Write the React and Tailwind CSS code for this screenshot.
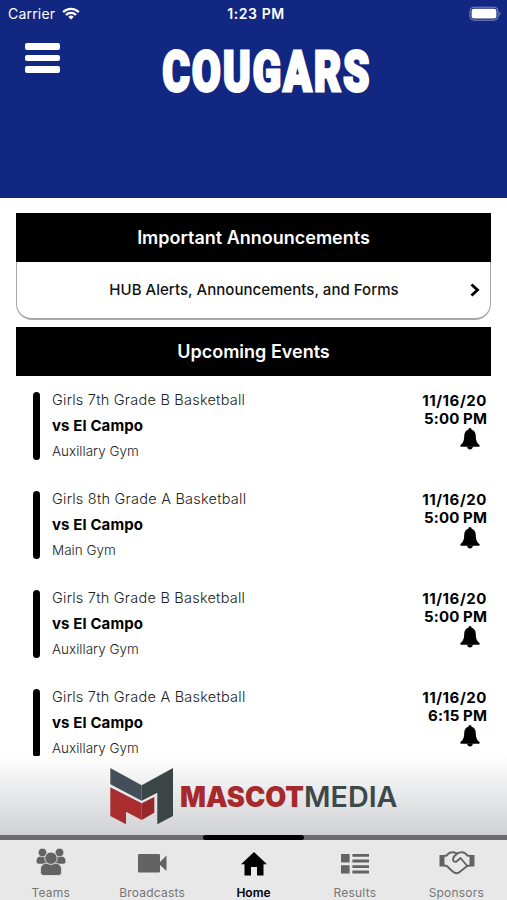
import React from "react";

const events = [
  { team: "Girls 7th Grade B Basketball", place: "Auxillary Gym", time: "5:00 PM" },
  { team: "Girls 8th Grade A Basketball", place: "Main Gym", time: "5:00 PM" },
  { team: "Girls 7th Grade B Basketball", place: "Auxillary Gym", time: "5:00 PM" },
  { team: "Girls 7th Grade A Basketball", place: "Auxillary Gym", time: "6:15 PM" },
];

function Wifi() {
  return (
    <svg width="18" height="13" viewBox="0 0 18 13" className="ml-[7px]" fill="none" stroke="#fff" strokeWidth="2.3">
      <path d="M1.2 5.1A11 11 0 0 1 16.8 5.1" />
      <path d="M4 8A7 7 0 0 1 14 8" />
      <path d="M9 12.6L6.3 9.9a3.9 3.9 0 0 1 5.4 0z" fill="#fff" stroke="none" />
    </svg>
  );
}

function Battery() {
  return (
    <svg width="33" height="16" viewBox="0 0 33 16">
      <rect x="1" y="1.2" width="28" height="13" rx="4" fill="none" stroke="#8790c4" strokeWidth="1" />
      <rect x="2.6" y="2.8" width="24.8" height="9.8" rx="2.4" fill="#fff" />
      <path d="M30.5 5.5q2 2.2 0 4.4z" fill="#8790c4" />
    </svg>
  );
}

function Bell() {
  return (
    <svg width="20" height="22" viewBox="0 0 20 22" className="mr-[7px]" fill="#000">
      <path d="M10 0a1.6 1.6 0 0 0-1.6 1.7C5.600 2.500 4.300 4.700 4.200 8C4.100 12 3.600 14.500.3 17.200Q.2 18.800 1.200 18.800H18.800Q19.800 18.800 19.700 17.200C16.400 14.500 15.900 12 15.800 8C15.700 4.700 14.400 2.500 11.600 1.700A1.600 1.600 0 0 0 10 0z" />
      <path d="M7.200 18.600h5.600a2.800 2.800 0 0 1-5.600 0z" />
    </svg>
  );
}

function TeamsIcon() {
  return (
    <svg width="30" height="28" viewBox="0 0 30 28" className="mt-[-3px]" fill="#636363">
      <path d="M4 8.600Q.5 9.500.5 13v.8q0 2 2 2H11V8.600z" />
      <path d="M26 8.600q3.500.9 3.500 4.400v.8q0 2-2 2H19V8.600z" />
      <circle cx="6.500" cy="4.500" r="4.300" stroke="#e8e8e8" strokeWidth=".7" />
      <circle cx="23.500" cy="4.500" r="4.300" stroke="#e8e8e8" strokeWidth=".7" />
      <path d="M10 15.200Q4.500 16 4.500 21.500v3q0 3 3 3h15q3 0 3-3v-3q0-5.500-5.500-6.300z" stroke="#e8e8e8" strokeWidth=".8" />
      <circle cx="15" cy="10.200" r="6.200" stroke="#e8e8e8" strokeWidth=".9" />
    </svg>
  );
}

function VideoIcon() {
  return (
    <svg width="29" height="19" viewBox="0 0 29 19" fill="#636363">
      <rect x="0" y="0" width="22" height="18.500" rx="1.200" />
      <path d="M22 8L28.500 1.500V17L22 11z" />
    </svg>
  );
}

function HomeIcon() {
  return (
    <svg width="26" height="24" viewBox="0 0 26 24" fill="#000">
      <path d="M13 0L26 12.300H22.500V23.600H16V15H10V23.600H3.500V12.300H0z" />
    </svg>
  );
}

function ResultsIcon() {
  return (
    <svg width="28" height="20" viewBox="0 0 28 20" fill="#636363">
      <path d="M0 0h8.600v8.400H0zM0 11.200h8.600v8.200H0zM11.400 0H28v2.800H11.400zM11.400 5.600H28v2.800H11.400zM11.400 11.200H28v2.800H11.400zM11.400 16.600H28v2.800H11.400z" />
    </svg>
  );
}

function HandshakeIcon() {
  return (
    <svg width="36" height="24" viewBox="0 0 36 24" className="mt-[-2px]" fill="none" stroke="#636363" strokeWidth="1.9" strokeLinejoin="round" strokeLinecap="round">
      <rect x="0.500" y="4" width="5" height="11.500" fill="#636363" stroke="none" />
      <rect x="30.500" y="4" width="5" height="11.500" fill="#636363" stroke="none" />
      <path d="M5.500 4.800H7.500Q10 1.300 13 1.200Q16 1 18 2.600Q20.500 1 23.500 1.200Q26.500 1.500 28.500 4.800H30.500" />
      <path d="M5.500 14.700H7.500L14 20.800Q17 23.200 20 21.400L28.500 14.700H30.500" />
      <path d="M18 2.600Q14.800 4.800 14 8.300Q14.300 11.500 17.500 10.500L21.500 7L27.800 14.500" />
    </svg>
  );
}

const tabs = [
  { label: "Teams", icon: <TeamsIcon /> },
  { label: "Broadcasts", icon: <VideoIcon /> },
  { label: "Home", icon: <HomeIcon />, active: true },
  { label: "Results", icon: <ResultsIcon /> },
  { label: "Sponsors", icon: <HandshakeIcon /> },
];

function Header() {
  return (
    <header className="flex h-[198px] shrink-0 flex-col bg-[#122782] text-white">
      <div className="grid h-[27px] grid-cols-3 items-center px-[8px] text-[14px]">
        <div className="flex items-center tracking-[0.2px]">Carrier<Wifi /></div>
        <div className="pl-[5px] text-center font-semibold tracking-[0.600px] whitespace-nowrap">1:23 PM</div>
        <div className="-mr-[3px] flex justify-end"><Battery /></div>
      </div>
      <div className="flex">
        <div className="ml-[25px] mt-[16px] flex w-[35px] flex-col gap-[5px]">
          <div className="h-[7px] rounded-[2px] bg-white" />
          <div className="h-[6px] rounded-[2px] bg-white" />
          <div className="h-[7px] rounded-[2px] bg-white" />
        </div>
        <svg width="300" height="80" viewBox="0 0 300 80" className="ml-[96px] mt-[12px] overflow-visible">
          <text x="6.500" y="52" textLength="209" lengthAdjust="spacingAndGlyphs" letterSpacing="3" fill="#fff" stroke="#fff" strokeWidth="3" strokeLinejoin="miter" fontFamily="Roboto, sans-serif" fontWeight="900" fontSize="55">COUGARS</text>
        </svg>
      </div>
    </header>
  );
}

function SectionTitle({ children }) {
  return (
    <h2 className="flex h-[49px] shrink-0 items-center justify-center bg-black text-[18px] font-semibold text-white">{children}</h2>
  );
}

function Event({ team, place, time }) {
  return (
    <div className="flex h-[99px] shrink-0">
      <div className="ml-[17px] h-[68px] w-[7px] rounded-full bg-black" />
      <div className="ml-[12px] flex flex-1 flex-col whitespace-nowrap">
        <div className="mt-[-2px] h-[20px] text-[14.500px] leading-[20px] font-light tracking-[0.230px] text-[#222]">{team}</div>
        <div className="mt-[6px] h-[20px] text-[15px] leading-[20px] font-bold tracking-[0.120px] text-black">vs El Campo</div>
        <div className="mt-[5px] h-[20px] text-[13.500px] leading-[20px] font-light text-[#222]">{place}</div>
      </div>
      <div className="mr-[4px] flex flex-col items-end text-[15px] leading-[18px] font-bold text-black">
        <div className="tracking-[0.560px]">11/16/20</div>
        <div className="tracking-[0.120px]">{time}</div>
        <Bell />
      </div>
    </div>
  );
}

function Sponsor() {
  return (
    <div className="flex h-[79px] shrink-0 bg-gradient-to-b from-white to-[#d0d1d4]">
      <svg width="300" height="79" viewBox="0 0 300 79" className="ml-[105px]">
        <path d="M5.300 12L36.700 29.300V44.700L5.300 28.300z" fill="#444e59" />
        <path d="M36.700 29.300L68 12V60L52.300 68.300V36.700L36.700 44.700z" fill="#3b4545" />
        <path d="M5.300 31.300L36.700 47.300V64L21 55.700V68.300L5.300 60z" fill="#a92d2e" />
        <path d="M36.700 47.300L49.300 41V56.700L36.700 64z" fill="#98282b" />
        <text x="75" y="51" textLength="124" lengthAdjust="spacingAndGlyphs" fill="#a8292c" fontFamily="Inter, sans-serif" fontWeight="900" fontSize="28">MASCOT</text>
        <text x="199" y="51" textLength="93.500" lengthAdjust="spacingAndGlyphs" fill="#3d4848" fontFamily="Inter, sans-serif" fontWeight="600" fontSize="28">MEDIA</text>
      </svg>
    </div>
  );
}

function TabBar() {
  return (
    <nav className="shrink-0 bg-[#e8e8e8]">
      <div className="h-[5px] bg-[#6b6b6b]">
        <div className="mx-auto h-[5px] w-[101px] rounded-full bg-black" />
      </div>
      <div className="grid h-[60px] grid-cols-5">
        {tabs.map((t) => (
          <div key={t.label} className="flex flex-col items-center">
            <div className="flex h-[46px] items-center pt-px pl-px">{t.icon}</div>
            <div className={t.active ? "text-[12px] leading-[14px] font-semibold text-black" : "text-[12px] leading-[14px] tracking-[0.2px] text-[#777]"}>{t.label}</div>
          </div>
        ))}
      </div>
    </nav>
  );
}

export default function App() {
  return (
    <div className="flex h-[900px] w-[507px] flex-col overflow-hidden bg-white font-['Inter',sans-serif]">
      <Header />
      <main className="flex h-[558px] shrink-0 flex-col overflow-hidden px-[16px] pt-[15px]">
        <SectionTitle>Important Announcements</SectionTitle>
        <div className="flex h-[58px] shrink-0 items-center rounded-b-[16px] border border-b-2 border-t-0 border-[#a8a8a8] text-[15px] font-medium tracking-[0.030px] text-[#111]">
          <div className="flex-1 pl-[21px] text-center">HUB Alerts, Announcements, and Forms</div>
          <svg width="10" height="14" viewBox="0 0 10 14" className="mr-[10px]" fill="none" stroke="#000" strokeWidth="2.800"><path d="M1.500 1.500L7.500 7L1.500 12.500" /></svg>
        </div>
        <div className="mt-[7px] mb-[16px] shrink-0"><SectionTitle>Upcoming Events</SectionTitle></div>
        {events.map((e, i) => <Event key={i} {...e} />)}
      </main>
      <Sponsor />
      <TabBar />
    </div>
  );
}
